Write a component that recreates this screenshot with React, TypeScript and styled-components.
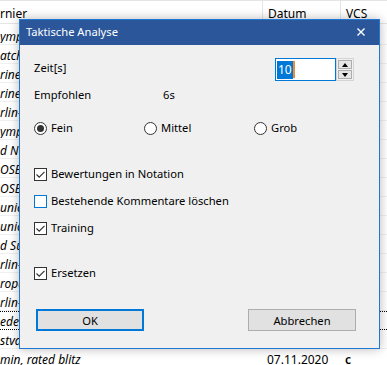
import React from 'react';
import styled, { createGlobalStyle } from 'styled-components';

const GlobalStyle = createGlobalStyle`
  html, body {
    margin: 0;
    padding: 0;
    background: #fff;
  }
  body {
    font-family: "Noto Sans", "Segoe UI", sans-serif;
    font-size: 11.2px;
    color: #000;
    overflow: hidden;
  }
`;

const Screen = styled.div`
  position: relative;
  width: 387px;
  height: 365px;
  overflow: hidden;
  background: #fff;
`;

const columns = '262px 78px 1fr';

const List = styled.div`
  display: flex;
  flex-direction: column;
  border-top: 1px solid #e5e5e5;
  font-size: 12px;
`;

const HeaderRow = styled.div`
  display: grid;
  grid-template-columns: ${columns};
  height: 22px;
  border-bottom: 1px solid #e5e5e5;
  margin-bottom: 2px;
`;

const HeaderCell = styled.div`
  display: flex;
  align-items: flex-end;
  padding: 0 0 1px 5px;
  line-height: 16px;
  border-left: 1px solid #e5e5e5;

  &:first-child {
    border-left: none;
    padding-left: 0;
  }
`;

const Row = styled.div<{ $focused?: boolean }>`
  display: grid;
  grid-template-columns: ${columns};
  height: 19px;
  box-sizing: border-box;
  align-items: center;
  line-height: 13px;
  padding-top: 1px;
  border-top: 1px ${p => (p.$focused ? 'dotted #000' : 'solid transparent')};
  border-bottom: 1px ${p => (p.$focused ? 'dotted #000' : 'solid #f0f0f0')};
`;

const NameCell = styled.div`
  font-style: italic;
  white-space: nowrap;
  overflow: hidden;
`;

const Cell = styled.div`
  padding-left: 5px;
  white-space: nowrap;
`;

const VcsCell = styled(Cell)`
  font-weight: 600;
`;

const Dialog = styled.div`
  position: absolute;
  left: 19px;
  top: 19px;
  width: 361px;
  height: 330px;
  box-sizing: border-box;
  border: 1px solid #1f78d1;
  background: #f0f0f0;
  box-shadow: 0 0 10px rgba(0, 0, 0, 0.28);
  display: flex;
  flex-direction: column;
`;

const TitleBar = styled.div`
  height: 25px;
  background: #2b579a;
  color: #fff;
  display: flex;
  align-items: center;
  justify-content: space-between;
  padding: 0 14px 2px 6px;
`;

const Title = styled.span`
  line-height: 16px;
`;

const Body = styled.div`
  flex: 1;
  display: flex;
  flex-direction: column;
  padding: 13px 23px 17px 14px;
  line-height: 16px;
`;

const TimeRow = styled.div`
  display: flex;
  justify-content: space-between;
  height: 23px;
`;

const FieldLabel = styled.span`
  margin-top: 2px;
`;

const SpinBox = styled.div`
  display: flex;
  height: 23px;
  margin-right: 2px;
`;

const SpinField = styled.div`
  width: 61px;
  box-sizing: border-box;
  border: 1px solid #0078d7;
  background: #fff;
  display: flex;
  align-items: center;
  padding-left: 1px;
  font-size: 12px;
`;

const Selection = styled.span`
  background: #0078d7;
  color: #fff;
  line-height: 18px;
  padding: 0 1px;
`;

const Caret = styled.span`
  width: 2px;
  height: 17px;
  background: #f28a30;
`;

const Spinner = styled.div`
  width: 18px;
  box-sizing: border-box;
  border: 1px solid #d4d4d4;
  background: #f0f0f0;
  display: flex;
  flex-direction: column;
  gap: 1px;
  padding: 1px;
`;

const SpinButton = styled.div<{ $down?: boolean }>`
  flex: 1;
  border: 1px solid #adadad;
  background: #e5e5e5;
  display: flex;
  align-items: center;
  justify-content: center;

  &::after {
    content: '';
    width: 0;
    height: 0;
    border-left: 3.5px solid transparent;
    border-right: 3.5px solid transparent;
    ${p =>
      p.$down
        ? 'border-top: 4px solid #000;'
        : 'border-bottom: 4px solid #000;'}
  }
`;

const InfoRow = styled.div`
  display: grid;
  grid-template-columns: 129px auto;
  margin-top: 6px;
`;

const RadioRow = styled.div`
  display: grid;
  grid-template-columns: 110px 110px auto;
  margin-top: 17px;
`;

const Option = styled.label<{ $gap?: number }>`
  display: flex;
  align-items: center;
  gap: 4px;
  margin-top: ${p => p.$gap ?? 0}px;
  height: 16px;
`;

const RadioCircle = styled.span<{ $checked?: boolean }>`
  width: 13px;
  height: 13px;
  box-sizing: border-box;
  border-radius: 50%;
  border: 1px solid #333;
  background: #fff;
  display: flex;
  align-items: center;
  justify-content: center;

  &::after {
    content: '';
    width: 7px;
    height: 7px;
    border-radius: 50%;
    background: ${p => (p.$checked ? '#333' : 'transparent')};
  }
`;

const CheckBox = styled.span<{ $hover?: boolean }>`
  width: 13px;
  height: 13px;
  box-sizing: border-box;
  border: 1px solid ${p => (p.$hover ? '#0078d7' : '#333')};
  background: #fff;
  display: flex;
  align-items: center;
  justify-content: center;
`;

const ButtonRow = styled.div`
  display: flex;
  justify-content: space-between;
  margin-top: 28px;
  padding-left: 2px;
`;

const Button = styled.button<{ $default?: boolean }>`
  width: 108px;
  height: 22px;
  box-sizing: border-box;
  background: #e1e1e1;
  border: ${p => (p.$default ? '2px solid #0078d7' : '1px solid #adadad')};
  font-family: inherit;
  font-size: 11.2px;
  color: #000;
  padding: 0;
`;

const Check = () => (
  <svg width="11" height="11" viewBox="0 0 11 11">
    <path d="M1.5 5.5 L4.2 8.2 L9.5 2.8" fill="none" stroke="#333" strokeWidth="1.2" />
  </svg>
);

const Close = () => (
  <svg width="8" height="8" viewBox="0 0 8 8">
    <path d="M0.5 0.5 L7.5 7.5 M7.5 0.5 L0.5 7.5" stroke="#fff" strokeWidth="1.4" />
  </svg>
);

// only the slivers left of the dialog are visible, so the hidden cells stay empty
const rows = [
  { name: 'ympi' },
  { name: 'atchi' },
  { name: 'riner' },
  { name: 'riner' },
  { name: 'rlin-' },
  { name: 'ympi' },
  { name: 'd No' },
  { name: 'OSB-' },
  { name: 'OSB-' },
  { name: 'unic' },
  { name: 'unic' },
  { name: 'd Sü' },
  { name: 'rlin-' },
  { name: 'ropa' },
  { name: 'rlin-' },
  { name: 'ederl', focused: true },
  { name: 'stval' },
  { name: 'min, rated blitz', date: '07.11.2020', vcs: 'c' },
];

const checks = [
  { label: 'Bewertungen in Notation', checked: true, gap: 30 },
  { label: 'Bestehende Kommentare löschen', checked: false, hover: true, gap: 11 },
  { label: 'Training', checked: true, gap: 11 },
  { label: 'Ersetzen', checked: true, gap: 29 },
];

const App: React.FC = () => {
  return (
    <Screen>
      <GlobalStyle />
      <List>
        <HeaderRow>
          <HeaderCell>rnier</HeaderCell>
          <HeaderCell>Datum</HeaderCell>
          <HeaderCell>VCS</HeaderCell>
        </HeaderRow>
        {rows.map((row, i) => (
          <Row key={i} $focused={row.focused}>
            <NameCell>{row.name}</NameCell>
            <Cell>{row.date}</Cell>
            <VcsCell>{row.vcs}</VcsCell>
          </Row>
        ))}
      </List>

      <Dialog>
        <TitleBar>
          <Title>Taktische Analyse</Title>
          <Close />
        </TitleBar>
        <Body>
          <TimeRow>
            <FieldLabel>Zeit[s]</FieldLabel>
            <SpinBox>
              <SpinField>
                <Selection>10</Selection>
                <Caret />
              </SpinField>
              <Spinner>
                <SpinButton />
                <SpinButton $down />
              </Spinner>
            </SpinBox>
          </TimeRow>
          <InfoRow>
            <span>Empfohlen</span>
            <span>6s</span>
          </InfoRow>
          <RadioRow>
            <Option>
              <RadioCircle $checked />
              Fein
            </Option>
            <Option>
              <RadioCircle />
              Mittel
            </Option>
            <Option>
              <RadioCircle />
              Grob
            </Option>
          </RadioRow>
          {checks.map(c => (
            <Option key={c.label} $gap={c.gap}>
              <CheckBox $hover={c.hover}>{c.checked && <Check />}</CheckBox>
              {c.label}
            </Option>
          ))}
          <ButtonRow>
            <Button $default>OK</Button>
            <Button>Abbrechen</Button>
          </ButtonRow>
        </Body>
      </Dialog>
    </Screen>
  );
};

export default App;
